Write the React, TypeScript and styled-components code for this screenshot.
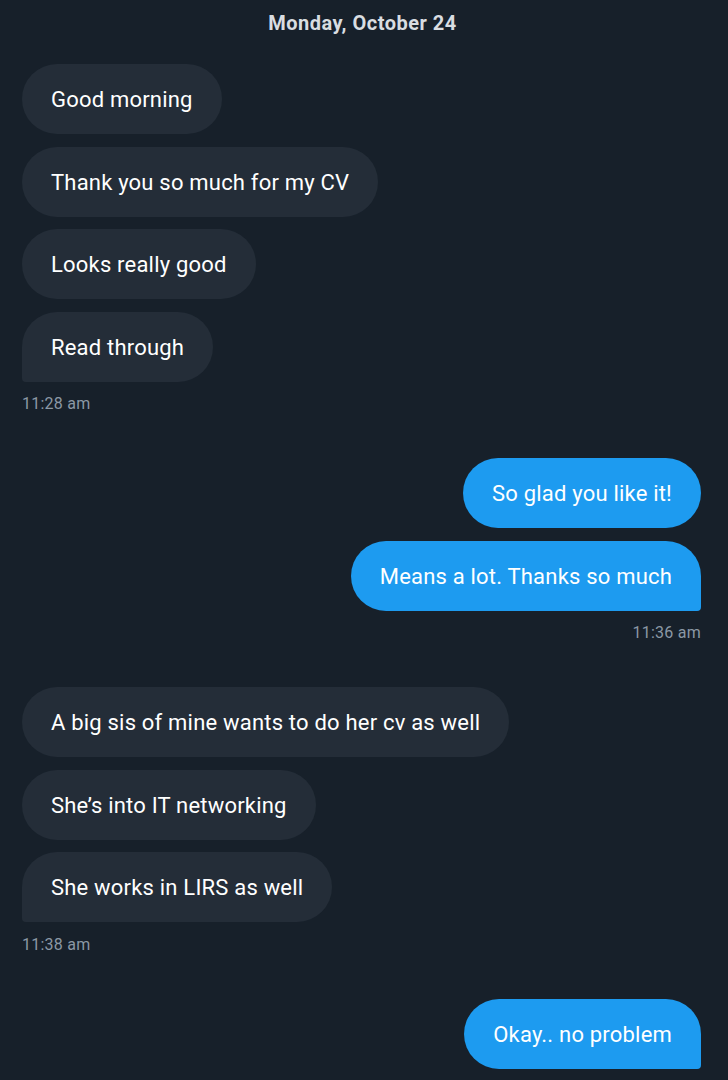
import React from 'react';
import styled, {createGlobalStyle} from "styled-components";

type MessageType = {
    id: number
    text: string
    mine: boolean
    time?: string
}

const messages: MessageType[][] = [
    [
        {id: 1, text: 'Good morning', mine: false},
        {id: 2, text: 'Thank you so much for my CV', mine: false},
        {id: 3, text: 'Looks really good', mine: false},
        {id: 4, text: 'Read through', mine: false, time: '11:28 am'},
    ],
    [
        {id: 5, text: 'So glad you like it!', mine: true},
        {id: 6, text: 'Means a lot. Thanks so much', mine: true, time: '11:36 am'},
    ],
    [
        {id: 7, text: 'A big sis of mine wants to do her cv as well', mine: false},
        {id: 8, text: 'She’s into IT networking', mine: false},
        {id: 9, text: 'She works in LIRS as well', mine: false, time: '11:38 am'},
    ],
    [
        {id: 10, text: 'Okay.. no problem', mine: true},
    ],
]

const GlobalStyle = createGlobalStyle`
  body {
    margin: 0;
    background: #17202a;
    font-family: Roboto, "Liberation Sans", sans-serif;
  }
`

export default function App() {
    return (
        <Page>
            <GlobalStyle/>
            <DateLabel>Monday, October 24</DateLabel>
            {messages.map((group, gi) => (
                <Group key={gi} mine={group[0].mine}>
                    {group.map((m, i) => (
                        <Bubble key={m.id} mine={m.mine} last={i === group.length - 1}>
                            {m.text}
                        </Bubble>
                    ))}
                    {group[group.length - 1].time && <Time>{group[group.length - 1].time}</Time>}
                </Group>
            ))}
        </Page>
    );
}

const Page = styled.div`
  width: 728px;
  height: 1080px;
  box-sizing: border-box;
  padding: 11px 27px 0 22px;
  display: flex;
  flex-direction: column;
  overflow: hidden;
`

const DateLabel = styled.div`
  text-align: center;
  color: #d9dde1;
  font-weight: 700;
  font-size: 20px;
  letter-spacing: 0.5px;
  line-height: 24px;
  margin-bottom: 29px;
  padding-left: 2px;
`

const Group = styled.div<{ mine: boolean }>`
  display: flex;
  flex-direction: column;
  align-items: ${({mine}) => mine ? 'flex-end' : 'flex-start'};
  gap: 12.5px;
  margin-bottom: 44px;
`

const Bubble = styled.div<{ mine: boolean, last: boolean }>`
  background: ${({mine}) => mine ? '#1d9bf0' : '#242d38'};
  color: #ffffff;
  font-size: 22px;
  letter-spacing: 0.2px;
  line-height: 26px;
  padding: 23px 29px 21px 29px;
  border-radius: 36px;
  ${({last, mine}) => last && (mine ? 'border-bottom-right-radius: 4px;' : 'border-bottom-left-radius: 4px;')}
`

const Time = styled.div`
  color: #8b98a5;
  font-size: 16px;
  letter-spacing: 0.25px;
  line-height: 20px;
`
